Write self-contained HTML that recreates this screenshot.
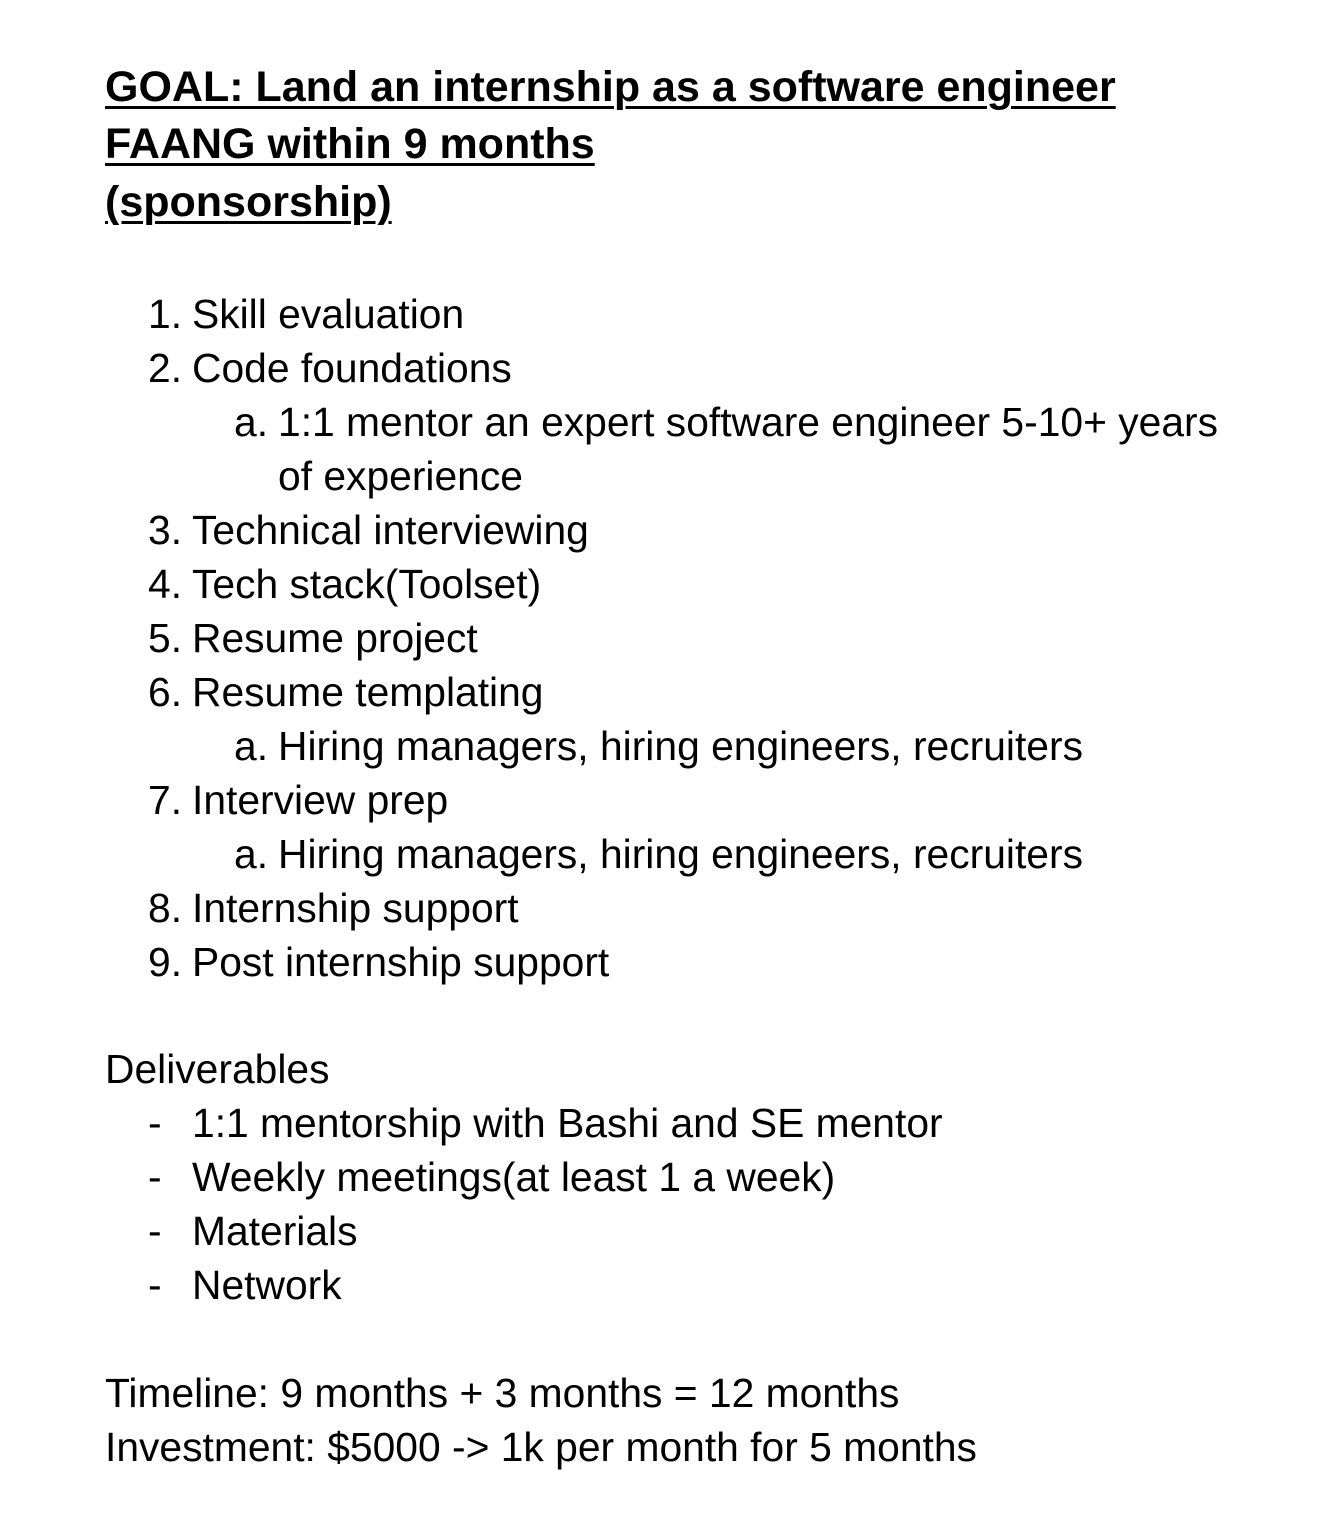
<!DOCTYPE html>
<html><head><style>
body{margin:0;width:1326px;height:1534px;background:#fff;font-family:"Liberation Sans",Arial,sans-serif;color:#000;position:relative;overflow:hidden}
.l{position:absolute;font-size:40.8px;line-height:54px;white-space:nowrap}
.h{font-size:43px;font-weight:bold;text-decoration:underline;text-decoration-thickness:3px;text-underline-offset:5px;line-height:57px}
</style></head><body>
<div class="l h" style="left:105px;top:59px">GOAL: Land an internship as a software engineer</div>
<div class="l h" style="left:105px;top:116px">FAANG within 9 months</div>
<div class="l h" style="left:105px;top:174px">(sponsorship)</div>

<div class="l" style="left:148px;top:287px">1.</div><div class="l" style="left:192px;top:287px">Skill evaluation</div>
<div class="l" style="left:148px;top:341px">2.</div><div class="l" style="left:192px;top:341px">Code foundations</div>
<div class="l" style="left:234px;top:395px">a.</div><div class="l" style="left:278px;top:395px">1:1 mentor an expert software engineer 5-10+ years</div>
<div class="l" style="left:278px;top:449px">of experience</div>
<div class="l" style="left:148px;top:503px">3.</div><div class="l" style="left:192px;top:503px">Technical interviewing</div>
<div class="l" style="left:148px;top:557px">4.</div><div class="l" style="left:192px;top:557px">Tech stack(Toolset)</div>
<div class="l" style="left:148px;top:611px">5.</div><div class="l" style="left:192px;top:611px">Resume project</div>
<div class="l" style="left:148px;top:665px">6.</div><div class="l" style="left:192px;top:665px">Resume templating</div>
<div class="l" style="left:234px;top:719px">a.</div><div class="l" style="left:278px;top:719px">Hiring managers, hiring engineers, recruiters</div>
<div class="l" style="left:148px;top:773px">7.</div><div class="l" style="left:192px;top:773px">Interview prep</div>
<div class="l" style="left:234px;top:827px">a.</div><div class="l" style="left:278px;top:827px">Hiring managers, hiring engineers, recruiters</div>
<div class="l" style="left:148px;top:881px">8.</div><div class="l" style="left:192px;top:881px">Internship support</div>
<div class="l" style="left:148px;top:935px">9.</div><div class="l" style="left:192px;top:935px">Post internship support</div>

<div class="l" style="left:105px;top:1042px">Deliverables</div>
<div class="l" style="left:148px;top:1096px">-</div><div class="l" style="left:192px;top:1096px">1:1 mentorship with Bashi and SE mentor</div>
<div class="l" style="left:148px;top:1150px">-</div><div class="l" style="left:192px;top:1150px">Weekly meetings(at least 1 a week)</div>
<div class="l" style="left:148px;top:1204px">-</div><div class="l" style="left:192px;top:1204px">Materials</div>
<div class="l" style="left:148px;top:1258px">-</div><div class="l" style="left:192px;top:1258px">Network</div>

<div class="l" style="left:105px;top:1366px">Timeline: 9 months + 3 months = 12 months</div>
<div class="l" style="left:105px;top:1420px">Investment: $5000 -&gt; 1k per month for 5 months</div>
</body></html>
